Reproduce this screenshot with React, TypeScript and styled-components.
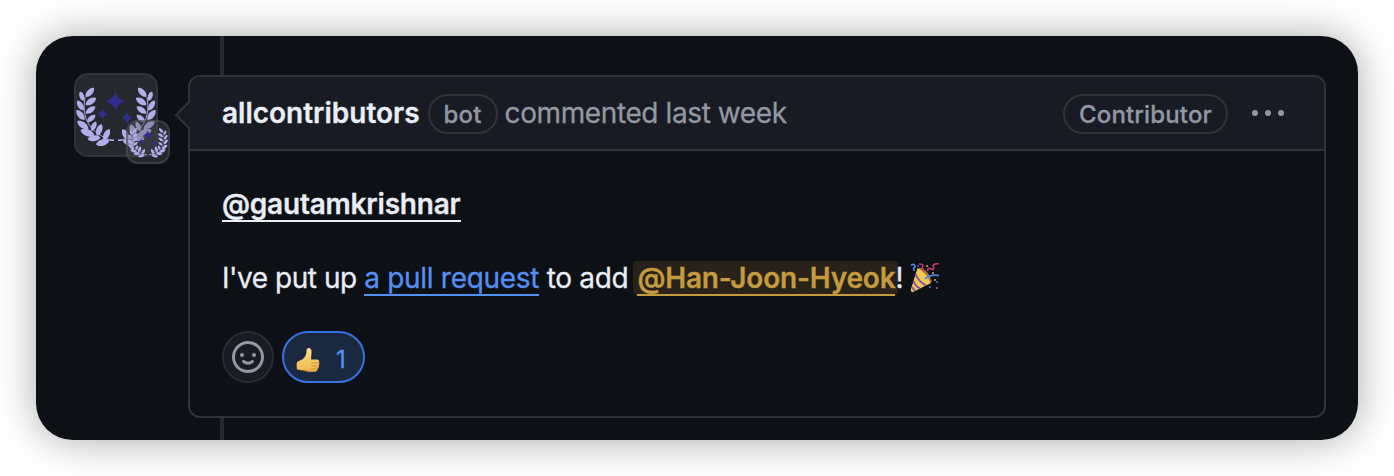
import React from 'react';
import styled, { createGlobalStyle } from 'styled-components';

const Global = createGlobalStyle`
  * { box-sizing: border-box; }
  body { margin: 0; background: #fff; font-family: Inter, "Liberation Sans", sans-serif; }
`;
const Stage = styled.main`
  width: 1394px; height: 476px; padding: 36px; overflow: hidden;
`;
const Panel = styled.div`
  display: flex; height: 404px; padding-left: 38px;
  background: #0d1015; border-radius: 37px;
  box-shadow: 0 0 40px rgba(0, 0, 0, 0.34);
`;
const AvatarColumn = styled.div`
  position: relative; width: 114px; padding-top: 37px; flex: none;
`;
const Avatar = styled.div<{ $small?: boolean }>`
  width: ${p => (p.$small ? 44 : 84)}px; height: ${p => (p.$small ? 44 : 84)}px;
  border: 2px solid ${p => (p.$small ? 'rgba(75,78,84,.55)' : '#303338')};
  border-radius: ${p => (p.$small ? 12 : 14)}px;
  background: ${p => (p.$small ? 'rgba(80,83,90,.36)' : '#25282d')};
  ${p => p.$small && 'position: absolute; left: 52px; top: 84px;'}
  svg { display: block; width: 100%; height: 100%; }
`;
const Column = styled.div`
  display: flex; flex-direction: column; width: 1138px;
`;
const Timeline = styled.div<{ $height: number }>`
  width: 4px; height: ${p => p.$height}px; margin-left: 32px; background: #25282d; flex: none;
`;
const Card = styled.article`
  position: relative; height: 343px; border: 2px solid #30333a; border-radius: 12px;
`;
const Pointer = styled.svg`
  position: absolute; left: -16px; top: 22px; width: 17px; height: 32px;
`;
const Header = styled.header`
  display: flex; align-items: center; height: 74px; padding: 0 38px 0 32px;
  background: #181b23; border-bottom: 2px solid #30333a; border-radius: 10px 10px 0 0;
`;
const Text = styled.span<{ $track: number; $weight?: number; $color?: string; $size?: number }>`
  font-size: ${p => p.$size ?? 28}px; line-height: 42px; white-space: nowrap;
  font-weight: ${p => p.$weight ?? 400}; letter-spacing: ${p => p.$track}px;
  color: ${p => p.$color ?? '#e9edf5'};
  -webkit-text-stroke: 0.3px currentColor;
`;
const Pill = styled.span<{ $width: number }>`
  display: flex; align-items: center; justify-content: center; width: ${p => p.$width}px; height: 40px;
  padding-top: 2px; border: 2px solid #30333a; border-radius: 20px; margin: 2px 7px 0 8px; flex: none;
`;
const Dots = styled.svg`
  width: 34px; height: 8px; margin: 0 1px 1px 16px;
`;
const Spacer = styled.div`flex: 1;`;
const Body = styled.div`
  display: flex; flex-direction: column; padding: 32px 32px 0;
`;
const Line = styled.p`
  display: flex; align-items: center; height: 42px; margin: 0 0 32px;
`;
const Link = styled.a<{ $color: string }>`
  display: block; height: 36px; border-bottom: 2px solid ${p => p.$color};
  ${Text} { display: block; line-height: 36px; }
`;
const Mention = styled.span`
  display: block; height: 34px; padding: 0 3px 0 4px; margin-left: 5px; background: #28221b; border-radius: 4px;
  ${Link} { height: 35px; }
  ${Text} { line-height: 35px; }
`;
const Exclaim = styled.span`margin-left: -3px;`;
const Reactions = styled.div`
  display: flex; gap: 8px;
`;
const Reaction = styled.button<{ $active?: boolean }>`
  display: flex; align-items: center; justify-content: center; gap: 16px; padding: 0;
  width: ${p => (p.$active ? 83 : 52)}px; height: 52px; border-radius: 26px;
  border: 2px solid ${p => (p.$active ? '#3971e4' : '#282b31')};
  background: ${p => (p.$active ? '#1b2940' : '#181b23')};
  font-family: inherit;
  ${p => p.$active && 'padding: 5px 5px 0 0;'}
`;

// Each leaf runs from its tip to the point where it joins the stem.
const LEAVES: [number, number, number, number][] = [
  [18, 12.7, 9.5, 22], [4, 16.5, 7.5, 26],
  [20, 23, 9.5, 30], [1.3, 25.5, 7.5, 35.5],
  [19.3, 31.5, 9.5, 38.5], [0.6, 35, 8.5, 45],
  [19.3, 40, 11, 47], [1.3, 46, 12.5, 54],
  [20, 46.5, 15.5, 56], [4.5, 55, 18.5, 60.5],
  [25.5, 49, 21, 61], [11.5, 64, 24.5, 62.5],
  [33.5, 54, 27.5, 65], [20, 69.5, 33.5, 65.5],
];
const leafPath = ([tx, ty, bx, by]: [number, number, number, number]) => {
  const dx = bx - tx, dy = by - ty, k = 0.32;
  const nx = -dy * k, ny = dx * k;
  const at = (t: number, s: number) => `${tx + dx * t + nx * s} ${ty + dy * t + ny * s}`;
  return `M${tx} ${ty}C${at(0.2, 0.9)} ${at(0.75, 1)} ${bx} ${by}C${at(0.75, -1)} ${at(0.2, -0.9)} ${tx} ${ty}Z`;
};
const Branch = () => (
  <g fill="#b4aceb">
    {LEAVES.map((leaf, i) => <path key={i} d={leafPath(leaf)} />)}
    <path d="M9 22Q3 55 36 65.500" fill="none" stroke="#b4aceb" strokeWidth="0.9" />
  </g>
);
const Laurel = () => (
  <svg viewBox="0 0 80 80">
    <Branch />
    <g transform="translate(80 0) scale(-1 1)"><Branch /></g>
    <path d="M34 65.300h4M42 65.300h4" stroke="#b4aceb" strokeWidth="1.4" />
    <g fill="#302d91">
      <path d="M39.500 16.500Q41.500 24.500 49.500 26.500Q41.500 28.500 39.500 36Q37.500 28.500 29.500 26.500Q37.500 24.500 39.500 16.500Z" />
      <path d="M26.500 33.500Q27.800 37.700 32 39Q27.800 40.300 26.500 44.500Q25.200 40.300 21 39Q25.200 37.700 26.500 33.500Z" />
      <path d="M51 37Q52.300 41.700 57 43Q52.300 44.300 51 49Q49.700 44.300 45 43Q49.700 41.700 51 37Z" />
    </g>
  </svg>
);
const Smile = () => (
  <svg width="32" height="32" viewBox="0 0 32 32" fill="none" stroke="#9198a1">
    <circle cx="16" cy="16" r="14.500" strokeWidth="3" />
    <g fill="#9198a1" stroke="none"><circle cx="10" cy="14" r="2" /><circle cx="22" cy="14" r="2" /></g>
    <path d="M11.500 20.500Q16 24 20.500 20.500" strokeWidth="3" strokeLinecap="round" />
  </svg>
);
const Thumb = () => (
  <svg width="24" height="26" viewBox="0 0 24 26">
    <defs><linearGradient id="skin" x2="0" y2="1"><stop stopColor="#ffe18a" /><stop offset="1" stopColor="#efb64c" /></linearGradient></defs>
    <path d="M1 15L7 12Q11 8 10.500 3Q11 .5 13.500 1Q16 2 15.500 6L15 12.500H21Q23.500 12.500 23 15Q24 16 23 18Q23.500 20.500 22 21Q22 24 19 24.500Q12 25.500 7.500 23.500L1 22.500Q0 18 1 15Z" fill="url(#skin)" />
    <path d="M15 16H23M15 19H22.500M15 22H21M8 23Q14 25 20 24.300" stroke="#cf9137" strokeWidth="1" fill="none" />
  </svg>
);
const Party = styled.svg`width: 30px; height: 30px; margin-left: 7px;`;
const PartyPopper = () => (
  <Party viewBox="0 0 30 30">
    <path d="M7.500 5Q18 9 21 20L3 29Q0 29 1 26Z" fill="#f0c852" />
    <path d="M8 5Q17 10 20.500 20Q22 15 17 9Q12 4 8 5Z" fill="#a9772d" />
    <path d="M5.500 11Q8 18 16 22.500M3.500 18Q5 23 10 25.500M2 24L5 28" stroke="#8448b5" strokeWidth="1.800" fill="none" />
    <path d="M1 2Q5 0 5 4Q3 5 4 8M15 16Q20 11 29 12.500" stroke="#4588e8" strokeWidth="1.700" fill="none" />
    <path d="M9 1Q14 1 12.500 4Q12 6 14 9M18 8Q17 4 21 6Q25 8 23 3Q24 0 29 1" stroke="#c43969" strokeWidth="1.600" fill="none" />
    <g fill="#d7ae42"><circle cx="23" cy="10" r="1" /><circle cx="25" cy="17" r="1" /><circle cx="17" cy="3" r="1" /></g>
    <g fill="#4d73cf"><circle cx="20" cy="24" r="1" /><circle cx="8" cy="3" r="1" /><circle cx="27" cy="19" r="1" /></g>
    <g fill="#d34a80"><circle cx="27" cy="25" r="1" /><circle cx="21" cy="18" r="1" /></g>
  </Party>
);

export default function App() {
  return (
    <>
      <Global />
      <Stage>
        <Panel>
          <AvatarColumn>
            <Avatar><Laurel /></Avatar>
            <Avatar $small><Laurel /></Avatar>
          </AvatarColumn>
          <Column>
            <Timeline $height={39} />
            <Card>
              <Header>
                <Text $weight={640} $track={0}>allcontributors</Text>
                <Pill $width={70}><Text $size={24} $weight={500} $track={0.3} $color="#9198a1">bot</Text></Pill>
                <Text $weight={430} $track={-0.4} $color="#9198a1">commented last week</Text>
                <Spacer />
                <Pill $width={165}><Text $size={24} $weight={530} $track={0.15} $color="#9198a1">Contributor</Text></Pill>
                <Dots viewBox="0 0 34 8" fill="#9198a1"><circle cx="4" cy="4" r="3" /><circle cx="17" cy="4" r="3" /><circle cx="30" cy="4" r="3" /></Dots>
              </Header>
              <Pointer viewBox="0 0 17 32"><path d="M16 2L2 16L16 30" fill="#181b23" stroke="#30333a" strokeWidth="2" /><path d="M16 3h1v26h-1z" fill="#181b23" /></Pointer>
              <Body>
                <Line><Link $color="#e9edf5"><Text $weight={640} $track={-0.2}>@gautamkrishnar</Text></Link></Line>
                <Line>
                  <Text $weight={430} $track={-0.45}>I've put up&nbsp;</Text>
                  <Link $color="#568ff2"><Text $weight={430} $track={-0.3} $color="#568ff2">a pull request</Text></Link>
                  <Text $weight={430} $track={-0.3}>&nbsp;to add</Text>
                  <Mention><Link $color="#c69a3e"><Text $weight={640} $track={-0.2} $color="#c69a3e">@Han-Joon-Hyeok</Text></Link></Mention>
                  <Text $weight={430} $track={-0.4}><Exclaim>!</Exclaim></Text>
                  <PartyPopper />
                </Line>
                <Reactions>
                  <Reaction aria-label="Add reaction"><Smile /></Reaction>
                  <Reaction $active><Thumb /><Text $size={24} $track={0} $color="#568ff2">1</Text></Reaction>
                </Reactions>
              </Body>
            </Card>
            <Timeline $height={22} />
          </Column>
        </Panel>
      </Stage>
    </>
  );
}
